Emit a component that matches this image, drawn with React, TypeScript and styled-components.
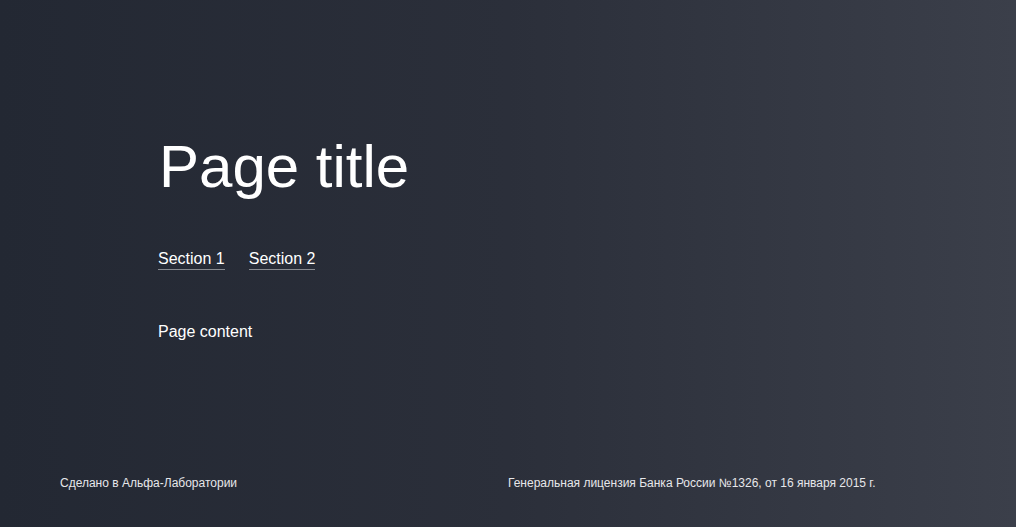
import styled, { createGlobalStyle } from "styled-components";

const GlobalStyle = createGlobalStyle`
  html, body {
    margin: 0;
    padding: 0;
  }
  body {
    font-family: "Liberation Sans", Arial, sans-serif;
    -webkit-font-smoothing: antialiased;
  }
`;

const Page = styled.div`
  min-height: 100vh;
  box-sizing: border-box;
  display: flex;
  flex-direction: column;
  background: linear-gradient(90deg, #232833 0%, #2b2f3a 50%, #3b3f4a 100%);
  color: #fff;
`;

const Main = styled.main`
  padding: 131px 60px 0 158px;
  display: flex;
  flex-direction: column;
`;

const Title = styled.h1`
  margin: 0 0 0 1px;
  font-size: 60px;
  line-height: 72px;
  font-weight: 400;
`;

const Tabs = styled.nav`
  display: flex;
  gap: 24px;
  margin-top: 46px;
`;

const Tab = styled.a`
  display: inline-block;
  font-size: 16px;
  line-height: 20px;
  color: #fff;
  text-decoration: none;
  border-bottom: 1px solid rgba(255, 255, 255, 0.45);
  cursor: pointer;
`;

const Content = styled.p`
  margin: 52px 0 0;
  font-size: 16px;
  line-height: 20px;
`;

const Footer = styled.footer`
  margin-top: auto;
  padding: 0 60px 36px;
  display: grid;
  grid-template-columns: 1fr 1fr;
  font-size: 12px;
  line-height: 16px;
  color: #e6e7ea;
`;

const FooterText = styled.span``;

export default function App() {
  return (
    <>
      <GlobalStyle />
      <Page>
        <Main>
          <Title>Page title</Title>
          <Tabs>
            <Tab>Section 1</Tab>
            <Tab>Section 2</Tab>
          </Tabs>
          <Content>Page content</Content>
        </Main>
        <Footer>
          <FooterText>Сделано в Альфа-Лаборатории</FooterText>
          <FooterText>Генеральная лицензия Банка России №1326, от 16 января 2015 г.</FooterText>
        </Footer>
      </Page>
    </>
  );
}
